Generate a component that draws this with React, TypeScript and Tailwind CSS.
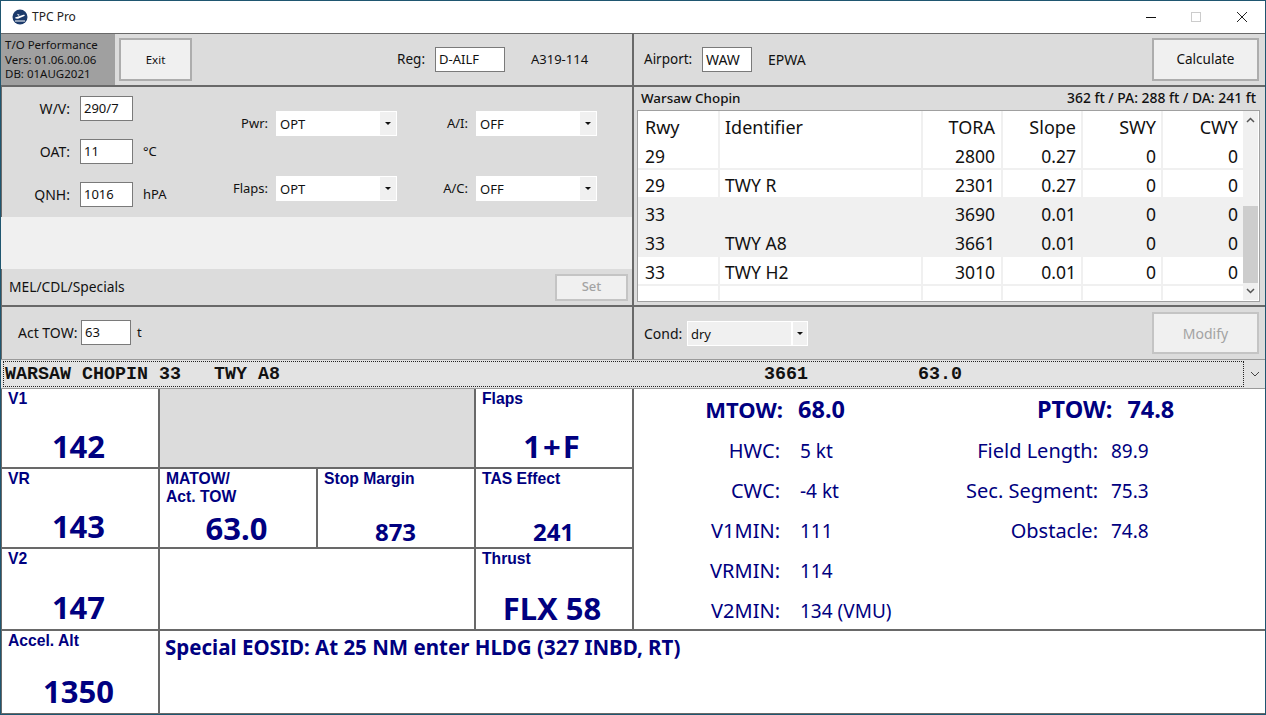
import React from "react";

const rows = [
  { rwy: "29", id: "", tora: "2800", slope: "0.27", sel: false },
  { rwy: "29", id: "TWY R", tora: "2301", slope: "0.27", sel: false },
  { rwy: "33", id: "", tora: "3690", slope: "0.01", sel: true },
  { rwy: "33", id: "TWY A8", tora: "3661", slope: "0.01", sel: true },
  { rwy: "33", id: "TWY H2", tora: "3010", slope: "0.01", sel: false },
];

const leftStats = [
  ["HWC:", "5 kt"],
  ["CWC:", "-4 kt"],
  ["V1MIN:", "111"],
  ["VRMIN:", "114"],
  ["V2MIN:", "134 (VMU)"],
];

const rightStats = [
  ["Field Length:", "89.9"],
  ["Sec. Segment:", "75.3"],
  ["Obstacle:", "74.8"],
];

function Btn({ label, className, disabled }: { label: string; className: string; disabled?: boolean }) {
  return (
    <div
      className={`flex items-center justify-center border-2 bg-[#f0f0f0] ${
        disabled ? "border-[#c4c4c4] text-[#a3a3a3]" : "border-[#adadad] text-[#111]"
      } ${className}`}
    >
      {label}
    </div>
  );
}

function Select({ value, gray }: { value: string; gray?: boolean }) {
  return (
    <div className={`flex h-[25px] w-[121px] border border-white ${gray ? "bg-[#f0f0f0]" : "bg-white"}`}>
      <span className="flex-1 pl-[3px] text-[13px] leading-[24px] text-[#111]">{value}</span>
      <span className={`flex w-[16px] items-center justify-center bg-[#f0f0f0] ${gray ? "border-l-2 border-white" : ""}`}>
        <svg width="6" height="3" viewBox="0 0 6 3">
          <path d="M0 0h6L3 3z" fill="#111" />
        </svg>
      </span>
    </div>
  );
}

function Input({ value, className }: { value: string; className: string }) {
  return (
    <div className={`h-[25px] border border-[#7a7a7a] bg-white pl-[3px] text-[13px] leading-[23px] text-[#111] ${className}`}>
      {value}
    </div>
  );
}

function Cell({
  label,
  value,
  valueClass = "text-[31px] leading-[42px] pr-[3px]",
}: {
  label: React.ReactNode;
  value?: string;
  valueClass?: string;
}) {
  return (
    <div className="flex flex-col bg-white">
      <div className="pl-[6px] pt-[1px] font-['Liberation_Sans',sans-serif] text-[15.7px] leading-[17.5px] font-bold text-[#000080]">
        {label}
      </div>
      {value && <div className={`mt-auto text-center font-bold text-[#000080] ${valueClass}`}>{value}</div>}
    </div>
  );
}

export default function App() {
  const comboText =
    "WARSAW CHOPIN 33   TWY A8" + " ".repeat(44) + "3661" + " ".repeat(10) + "63.0";
  const cols = "grid-cols-[82px_203px_80px_80px_80px_80px]";
  const divider = "border-r-2 border-[#f0f0f0]";

  return (
    <div className="flex h-[715px] w-[1266px] flex-col overflow-hidden border border-[#1f5670] bg-white font-['Noto_Sans',sans-serif]">
      {/* title bar */}
      <div className="flex h-[33px] shrink-0 items-center border-b border-[#696969] bg-white">
        <svg className="ml-[11px]" width="16" height="16" viewBox="0 0 16 16">
          <circle cx="8" cy="8" r="7.5" fill="#1b3a6b" />
          <path d="M3 8.5l8.5-2.8c1-.3 1.8.6.9 1.2L6 9.8 3.6 9.6zM5 4.8l3 1.2-1.8.7zM3 11.5h10v1H3z" fill="#fff" />
        </svg>
        <span className="ml-[4px] text-[12px] text-[#222]">TPC Pro</span>
        <div className="ml-auto flex items-center pr-[17px]">
          <span className="mr-[35px] h-[1px] w-[10px] bg-[#111]" />
          <span className="mr-[35px] h-[10px] w-[10px] border border-[#ccc]" />
          <svg width="12" height="12" viewBox="0 0 12 12">
            <path d="M1 1l10 10M11 1L1 11" stroke="#222" strokeWidth="1" fill="none" />
          </svg>
        </div>
      </div>

      {/* upper panels */}
      <div className="flex h-[325px] shrink-0 bg-[#696969]">
        {/* left side */}
        <div className="flex w-[631px] flex-col bg-[#dcdcdc] text-[13px] text-[#111] shadow-[inset_1px_0_0_#696969]">
          <div className="flex h-[53px] shrink-0 items-center border-b-2 border-[#696969]">
            <div className="h-full w-[114px] bg-[#a0a0a0] pl-[4px] pt-[4px] text-[11.5px] leading-[14.5px] text-[#111]">
              <div>T/O Performance</div>
              <div>Vers: 01.06.00.06</div>
              <div>DB: 01AUG2021</div>
            </div>
            <Btn label="Exit" className="ml-[4px] h-[43px] w-[73px] text-[11.5px]" />
            <span className="ml-[205px] w-[28px] text-right text-[13.5px]">Reg:</span>
            <Input value="D-AILF" className="ml-[10px] w-[70px]" />
            <span className="ml-[26px]">A319-114</span>
          </div>

          <div className="flex h-[130px] shrink-0">
            <div className="flex w-[219px] flex-col gap-[18px] pt-[9px]">
              {[
                ["W/V:", "290/7", ""],
                ["OAT:", "11", "°C"],
                ["QNH:", "1016", "hPA"],
              ].map(([l, v, u]) => (
                <div key={l} className="flex items-center">
                  <span className="w-[69px] text-right text-[14px]">{l}</span>
                  <Input value={v} className="ml-[10px] w-[53px]" />
                  <span className="ml-[10px]">{u}</span>
                </div>
              ))}
            </div>
            <div className="grid grid-cols-[48px_121px_79px_121px] grid-rows-[25px_25px] gap-y-[40px] pt-[24px]">
              <span className="self-center text-right">Pwr:</span>
              <div className="ml-[8px]"><Select value="OPT" /></div>
              <span className="self-center pl-[8px] text-right">A/I:</span>
              <div className="ml-[8px]"><Select value="OFF" /></div>
              <span className="self-center text-right">Flaps:</span>
              <div className="ml-[8px]"><Select value="OPT" /></div>
              <span className="self-center pl-[8px] text-right">A/C:</span>
              <div className="ml-[8px]"><Select value="OFF" /></div>
            </div>
          </div>

          <div className="h-[52px] shrink-0 bg-[#f0f0f0]" />

          <div className="flex h-[38px] shrink-0 items-center border-b-2 border-[#696969] pl-[8px] pr-[4px]">
            <span className="text-[13.8px]">MEL/CDL/Specials</span>
            <Btn label="Set" disabled className="ml-auto h-[27px] w-[73px] text-[13px] font-medium" />
          </div>

          <div className="flex flex-1 items-center pb-[1px] pl-[17px]">
            <span className="w-[60px] text-[14px] whitespace-nowrap">Act TOW:</span>
            <Input value="63" className="ml-[3px] w-[50px] text-[12px]" />
            <span className="ml-[6px]">t</span>
          </div>
        </div>

        {/* right side */}
        <div className="ml-[2px] flex flex-1 flex-col bg-[#dcdcdc] text-[13px] text-[#111]">
          <div className="flex h-[53px] shrink-0 items-center border-b-2 border-[#696969] pl-[10px]">
            <span className="w-[48px] text-[13.5px]">Airport:</span>
            <Input value="WAW" className="ml-[10px] w-[50px] text-[14px]" />
            <span className="ml-[16px] text-[14px]">EPWA</span>
            <Btn label="Calculate" className="ml-auto mr-[6px] h-[43px] w-[107px] text-[13.5px]" />
          </div>

          <div className="flex h-[23px] shrink-0 items-center justify-between pl-[7px] pr-[9px] font-medium">
            <span className="text-[13.4px]">Warsaw Chopin</span>
            <span className="text-[13.9px]">362 ft / PA: 288 ft / DA: 241 ft</span>
          </div>

          <div className="ml-[3px] mr-[5px] flex h-[192px] shrink-0 border border-[#a0a0a0] bg-white pb-[1px]">
            <div className="flex-1 overflow-hidden text-[18px] text-[#111]">
              <div className={`grid h-[30px] leading-[33px] ${cols}`}>
                <span className={`${divider} pl-[7px]`}>Rwy</span>
                <span className={`${divider} pl-[5px]`}>Identifier</span>
                <span className={`${divider} pr-[6px] text-right`}>TORA</span>
                <span className={`${divider} pr-[5px] text-right`}>Slope</span>
                <span className={`${divider} pr-[5px] text-right`}>SWY</span>
                <span className="pr-[5px] text-right">CWY</span>
              </div>
              {rows.map((r, i) => (
                <div
                  key={i}
                  className={`grid h-[29px] ${cols} border-b-2 border-[#f0f0f0] text-[17.5px] leading-[30px] ${
                    r.sel ? "bg-[#f0f0f0]" : ""
                  }`}
                >
                  <span className={`${divider} pl-[7px]`}>{r.rwy}</span>
                  <span className={`${divider} pl-[5px]`}>{r.id}</span>
                  <span className={`${divider} pr-[6px] text-right`}>{r.tora}</span>
                  <span className={`${divider} pr-[5px] text-right`}>{r.slope}</span>
                  <span className={`${divider} pr-[5px] text-right`}>0</span>
                  <span className="pr-[5px] text-right">0</span>
                </div>
              ))}
              <div className={`grid h-[14px] ${cols}`}>
                <span className={divider} />
                <span className={divider} />
                <span className={divider} />
                <span className={divider} />
                <span className={divider} />
                <span />
              </div>
            </div>
            <div className="mr-[1px] flex w-[15px] flex-col bg-[#f0f0f0]">
              <div className="flex h-[17px] items-center justify-center">
                <svg width="9" height="6" viewBox="0 0 9 6">
                  <path d="M1 5l3.5-3.5L8 5" stroke="#555" strokeWidth="1.5" fill="none" />
                </svg>
              </div>
              <div className="mt-[78px] h-[77px] bg-[#cdcdcd]" />
              <div className="flex h-[16px] items-center justify-center">
                <svg width="9" height="6" viewBox="0 0 9 6">
                  <path d="M1 1l3.5 3.5L8 1" stroke="#555" strokeWidth="1.5" fill="none" />
                </svg>
              </div>
            </div>
          </div>

          <div className="mt-[3px] h-[2px] shrink-0 bg-[#696969]" />

          <div className="flex flex-1 items-center pl-[10px] pr-[5px]">
            <span className="w-[37px] text-[14px]">Cond:</span>
            <div className="ml-[6px]"><Select value="dry" gray /></div>
            <Btn label="Modify" disabled className="ml-auto mr-[1px] h-[42px] w-[107px] text-[14px]" />
          </div>
        </div>
      </div>

      {/* selected runway bar */}
      <div className="flex h-[30px] shrink-0 items-center border-y border-[#9a9a9a] bg-[#e3e3e3]">
        <div className="ml-[2px] h-[26px] w-[1241px] overflow-hidden border border-dotted border-[#222] pl-[1px] font-['Liberation_Mono',monospace] text-[18.33px] leading-[25px] font-bold whitespace-pre text-[#111]">
          {comboText}
        </div>
        <svg className="ml-[6px]" width="10" height="6" viewBox="0 0 10 6">
          <path d="M1 1l4 4 4-4" stroke="#444" strokeWidth="1" fill="none" />
        </svg>
      </div>

      {/* results */}
      <div className="grid flex-1 grid-cols-[156px_156px_156px_156px_1fr] grid-rows-[78px_78px_80px_1fr] gap-[2px] border-b border-[#696969] bg-[#696969] pl-[1px]">
        <Cell label="V1" value="142" />
        <div className="col-span-2 bg-[#dcdcdc]" />
        <Cell label="Flaps" value="1+F" valueClass="text-[31px] leading-[42px] pr-[3px] tracking-[2px]" />
        <div className="row-span-3 bg-white text-[#000080]">
          <div className="mb-[2px] flex h-[40px] items-center text-[22px] leading-[40px] font-bold">
            <span className="w-[149px] text-right">MTOW:</span>
            <span className="ml-[15px] w-[239px] text-[23.5px]">68.0</span>
            <span className="text-[23.5px]">PTOW:</span>
            <span className="ml-[15px] text-[23.5px]">74.8</span>
          </div>
          <div className="flex leading-[40px]">
            <div className="grid w-[316px] grid-cols-[146px_1fr] content-start">
              {leftStats.map(([l, v]) => (
                <React.Fragment key={l}>
                  <span className="text-right text-[20px]">{l}</span>
                  <span className="pl-[20px] text-[19px]">{v}</span>
                </React.Fragment>
              ))}
            </div>
            <div className="grid grid-cols-[148px_1fr] content-start">
              {rightStats.map(([l, v]) => (
                <React.Fragment key={l}>
                  <span className="text-right text-[20px] whitespace-nowrap">{l}</span>
                  <span className="pl-[13px] text-[19px]">{v}</span>
                </React.Fragment>
              ))}
            </div>
          </div>
        </div>

        <Cell label="VR" value="143" />
        <Cell
          label={
            <>
              MATOW/
              <br />
              Act. TOW
            </>
          }
          value="63.0"
          valueClass="text-[31px] leading-[47px] pr-[3px]"
        />
        <Cell label="Stop Margin" value="873" valueClass="text-[24px] leading-[30px] pr-[1px]" />
        <Cell label="TAS Effect" value="241" valueClass="text-[24px] leading-[30px] pr-[1px]" />

        <Cell label="V2" value="147" valueClass="text-[31px] leading-[44px] pr-[3px]" />
        <div className="col-span-2 bg-white" />
        <Cell label="Thrust" value="FLX 58" valueClass="text-[31px] leading-[42px] pr-[4px]" />

        <Cell label="Accel. Alt" value="1350" valueClass="text-[31px] leading-[44px] pr-[3px]" />
        <div className="col-span-4 bg-white pl-[5px] pt-[1px] text-[20.5px] font-bold text-[#000080]">
          Special EOSID: At 25 NM enter HLDG (327 INBD, RT)
        </div>
      </div>
    </div>
  );
}
